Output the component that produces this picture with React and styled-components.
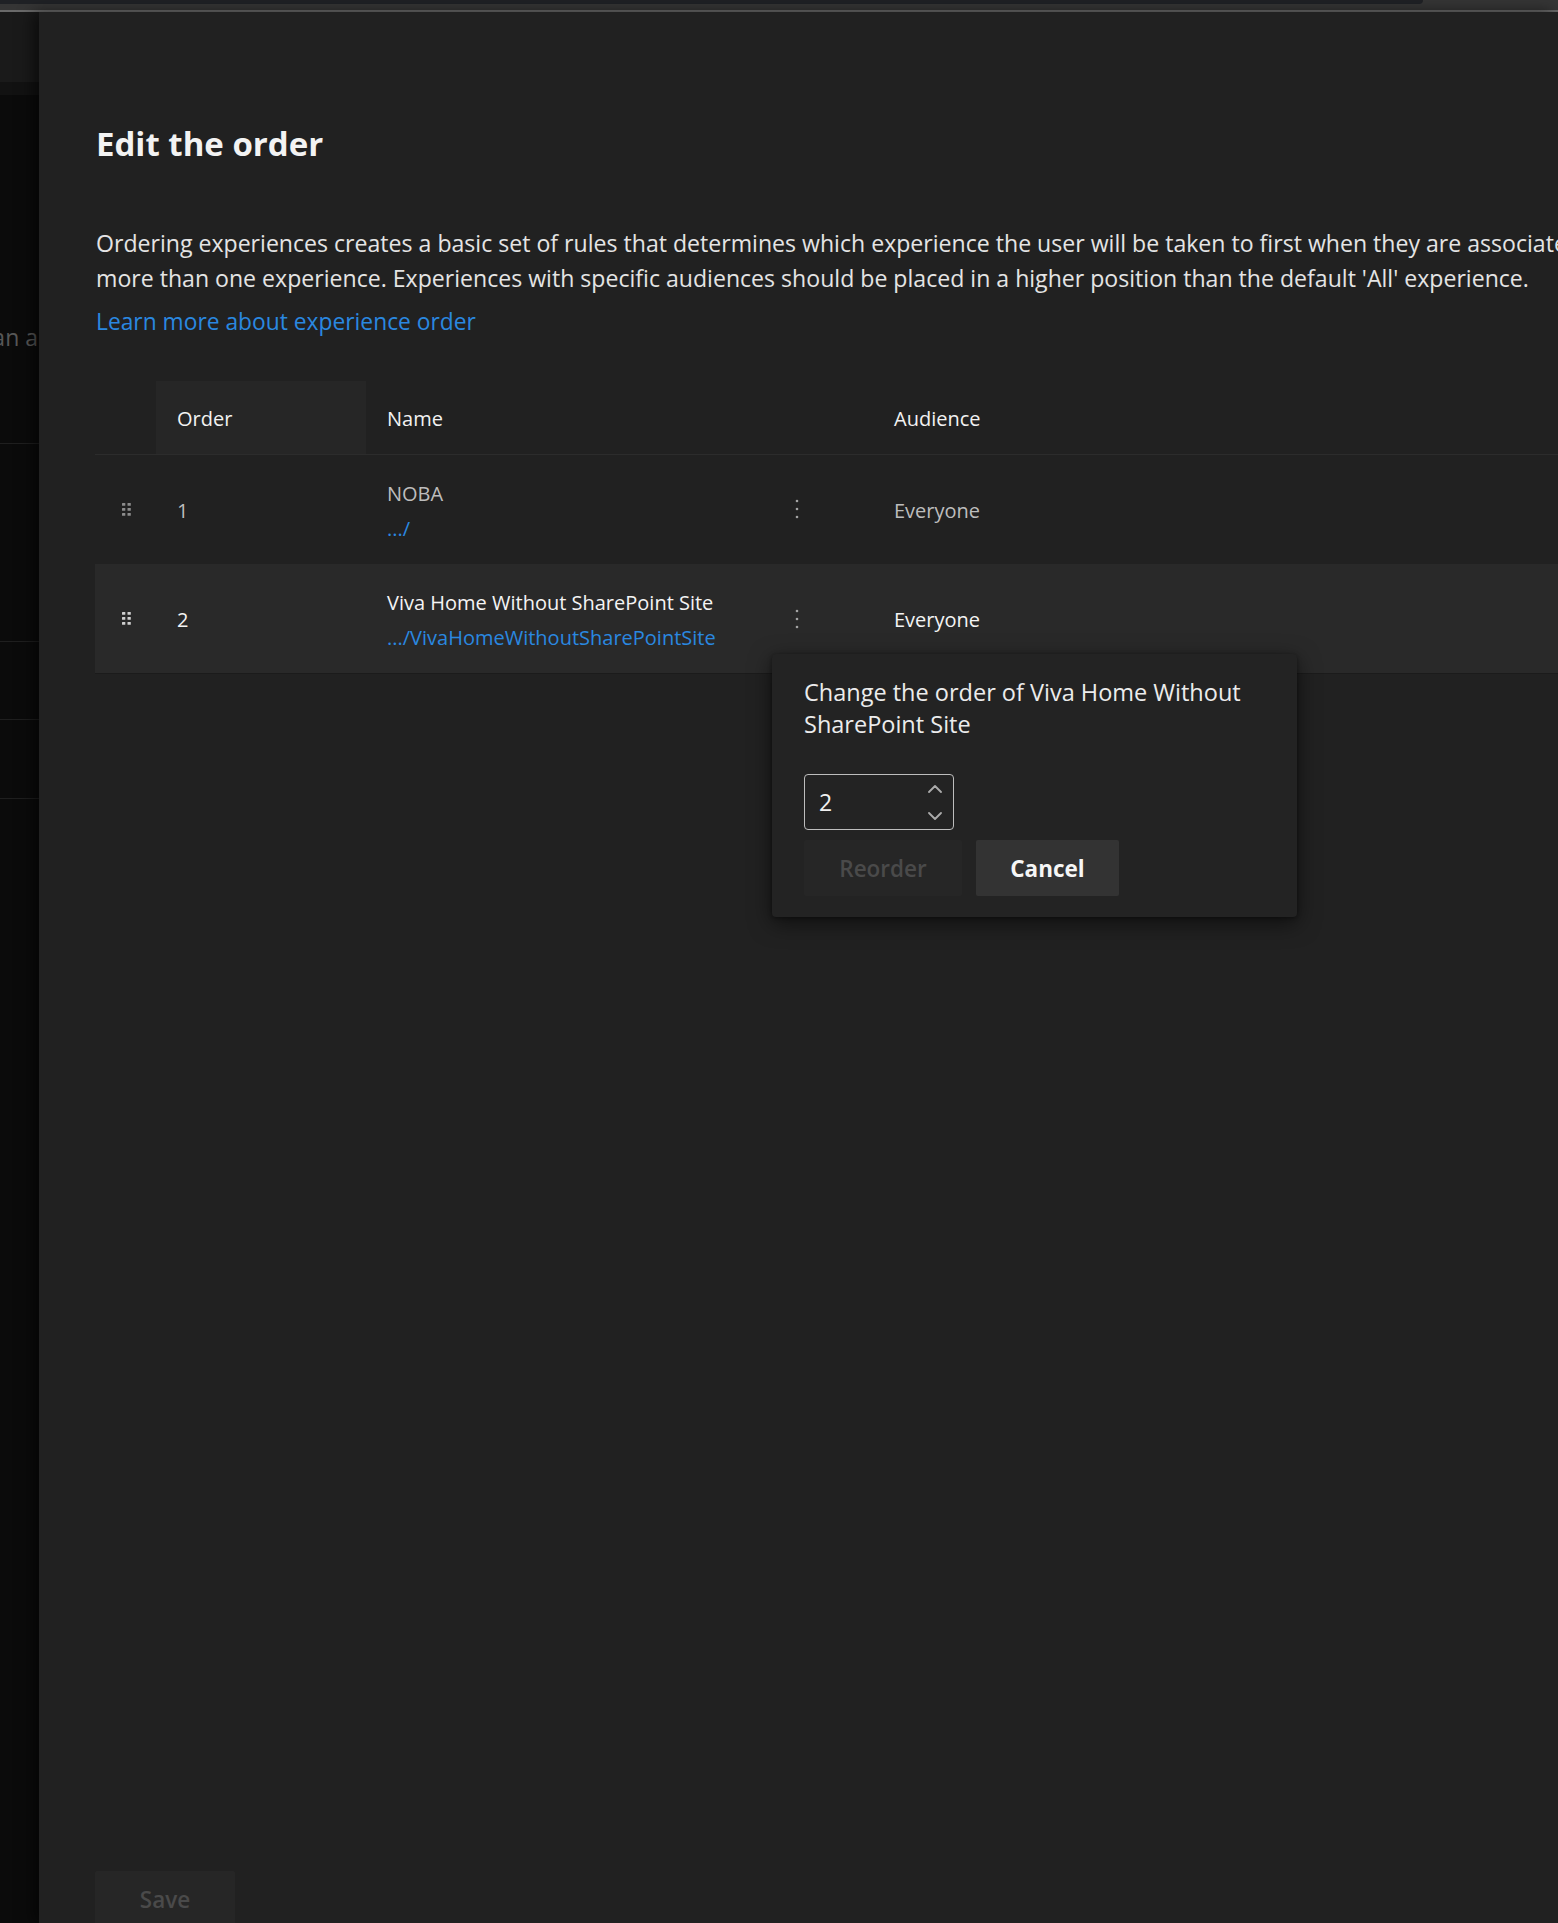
import React from 'react';
import styled, { createGlobalStyle } from 'styled-components';

const GlobalStyle = createGlobalStyle`
  html, body { margin: 0; padding: 0; background: #0b0b0b; }
  body { font-family: "Open Sans", "Noto Sans", sans-serif; overflow: hidden; }
  #root { width: 1558px; height: 1923px; }
  * { box-sizing: border-box; }
`;

const Page = styled.div`
  display: flex;
  flex-direction: column;
  width: 1558px;
  height: 1923px;
  overflow: hidden;
  background: #0b0b0b;
`;

const TopBar = styled.div`
  flex-shrink: 0;
  height: 12px;
  background: #353535;
  border-bottom: 2px solid #6a6a6a;
`;

const ScrollThumb = styled.div`
  width: 1423px;
  height: 4px;
  background: #1f2125;
  border-bottom-right-radius: 4px;
`;

const Main = styled.div`
  flex: 1;
  display: flex;
  min-height: 0;
`;

const Backdrop = styled.div`
  width: 39px;
  flex-shrink: 0;
  display: flex;
  flex-direction: column;
  overflow: hidden;
  background: #0b0b0b;
`;

const BackdropHeader = styled.div`
  height: 70px;
  background: #1a1a1a;
`;

const BackdropBand = styled.div`
  height: 13px;
  background: #121212;
`;

const BackdropText = styled.div`
  margin-top: 227px;
  height: 30px;
  display: flex;
  justify-content: flex-end;
  padding-right: 1px;
  white-space: nowrap;
  font-size: 23px;
  line-height: 30px;
  color: #575757;
`;

const BackdropRow = styled.div`
  flex-shrink: 0;
  height: ${p => p.$h}px;
  border-bottom: 1px solid #1f1f1f;
`;

const Panel = styled.div`
  flex: 1;
  min-width: 0;
  display: flex;
  flex-direction: column;
  background: #212121;
  box-shadow: -6px 0 14px rgba(0, 0, 0, 0.55);
  padding: 112px 0 0 56px;
  overflow: hidden;
  position: relative;
`;

const Title = styled.h1`
  margin: 0 0 0 1px;
  font-size: 33px;
  line-height: 40px;
  font-weight: 700;
  color: #f3f3f3;
`;

const Description = styled.p`
  margin: 62px 0 0 1px;
  font-size: 23.1px;
  line-height: 35px;
  color: #e4e4e4;
  white-space: nowrap;
`;

const LearnLink = styled.a`
  display: block;
  margin: 8px 0 0 1px;
  font-size: 22.8px;
  line-height: 35px;
  color: #2a88e0;
  text-decoration: none;
  white-space: nowrap;
`;

const Table = styled.div`
  position: relative;
  margin-top: 42px;
`;

const columns = '61px 210px 507px 1fr';

const HeaderRow = styled.div`
  display: grid;
  grid-template-columns: ${columns};
  height: 74px;
  border-bottom: 1px solid #2c2c2c;
`;

const HeaderCell = styled.div`
  display: flex;
  align-items: center;
  padding-left: 21px;
  padding-top: 2px;
  font-size: 20px;
  color: #f2f2f2;
  background: ${p => (p.$active ? '#262626' : 'transparent')};
`;

const Row = styled.div`
  display: grid;
  grid-template-columns: ${columns};
  height: ${p => (p.$selected ? 110 : 109)}px;
  background: ${p => (p.$selected ? '#292929' : 'transparent')};
  border-bottom: 1px solid ${p => (p.$selected ? '#1b1b1b' : 'transparent')};
  color: ${p => (p.$selected ? '#f4f4f4' : '#bdbdbd')};
`;

const HandleCell = styled.div`
  display: flex;
  align-items: center;
  justify-content: center;
  padding-left: 1px;
  color: ${p => (p.$selected ? '#cfcfcf' : '#8c8c8c')};
`;

const Cell = styled.div`
  display: flex;
  align-items: center;
  padding-left: 21px;
  padding-top: 2px;
  font-size: 20px;
`;

const NameCell = styled.div`
  display: flex;
  align-items: center;
  justify-content: space-between;
  padding: 0 60px 0 21px;
  font-size: 20px;
`;

const NameBlock = styled.div`
  display: flex;
  flex-direction: column;
  line-height: 35px;
  padding-top: 3px;
`;

const PathLink = styled.a`
  color: #2a88e0;
  text-decoration: none;
`;

const KebabButton = styled.button`
  width: 32px;
  height: 40px;
  padding: 0;
  border: none;
  background: transparent;
  display: flex;
  align-items: center;
  justify-content: center;
  color: #a3a3a3;
`;

const Callout = styled.div`
  position: absolute;
  top: 273px;
  left: 677px;
  width: 525px;
  height: 263px;
  padding: 22px 32px 21px;
  background: #232323;
  border-radius: 4px;
  box-shadow: 0 6px 22px rgba(0, 0, 0, 0.55), 0 1px 4px rgba(0, 0, 0, 0.4);
  display: flex;
  flex-direction: column;
`;

const CalloutTitle = styled.div`
  font-size: 23.5px;
  line-height: 32px;
  color: #ececec;
  max-width: 450px;
`;

const SpinBox = styled.div`
  margin-top: 34px;
  width: 150px;
  height: 56px;
  border: 1px solid #bdbdbd;
  border-radius: 4px;
  display: flex;
  align-items: center;
  justify-content: space-between;
  padding: 0 11px 0 14px;
  font-size: 23px;
  color: #f0f0f0;
`;

const SpinArrows = styled.div`
  display: flex;
  flex-direction: column;
  gap: 19px;
  color: #ababab;
`;

const ButtonRow = styled.div`
  margin-top: 10px;
  display: flex;
  gap: 14px;
`;

const Button = styled.button`
  height: 56px;
  width: ${p => p.$w}px;
  border: none;
  border-radius: 2px;
  font-family: inherit;
  font-size: 22.5px;
  font-weight: ${p => (p.$primary ? 700 : 600)};
  background: ${p => (p.$primary ? '#333333' : '#262626')};
  color: ${p => (p.$primary ? '#f6f6f6' : '#4a4a4a')};
  padding: 0;
`;

const Footer = styled.div`
  margin-top: auto;
  margin-bottom: -4px;
`;

const DragHandle = () => (
  <svg width="9" height="13" viewBox="0 0 9 13" fill="currentColor">
    <rect x="0" y="0" width="3.3" height="2.8" rx="0.5" />
    <rect x="5.5" y="0" width="3.3" height="2.8" rx="0.5" />
    <rect x="0" y="5" width="3.3" height="2.8" rx="0.5" />
    <rect x="5.5" y="5" width="3.3" height="2.8" rx="0.5" />
    <rect x="0" y="10" width="3.3" height="2.8" rx="0.5" />
    <rect x="5.5" y="10" width="3.3" height="2.8" rx="0.5" />
  </svg>
);

const Kebab = () => (
  <svg width="4" height="20" viewBox="0 0 4 20" fill="currentColor">
    <circle cx="2" cy="2" r="1.3" />
    <circle cx="2" cy="10" r="1.3" />
    <circle cx="2" cy="18" r="1.3" />
  </svg>
);

const Chevron = ({ up }) => (
  <svg width="14" height="8" viewBox="0 0 14 8" fill="none" stroke="currentColor" strokeWidth="1.8" strokeLinecap="round" strokeLinejoin="round">
    {up ? <polyline points="1,7 7,1 13,7" /> : <polyline points="1,1 7,7 13,1" />}
  </svg>
);

const rows = [
  { order: 1, name: 'NOBA', path: '.../', audience: 'Everyone', selected: false },
  { order: 2, name: 'Viva Home Without SharePoint Site', path: '.../VivaHomeWithoutSharePointSite', audience: 'Everyone', selected: true },
];

export default function App() {
  return (
    <Page>
      <GlobalStyle />
      <TopBar>
        <ScrollThumb />
      </TopBar>
      <Main>
        <Backdrop>
          <BackdropHeader />
          <BackdropBand />
          <BackdropText>more than a</BackdropText>
          <BackdropRow $h={92} />
          <BackdropRow $h={198} />
          <BackdropRow $h={78} />
          <BackdropRow $h={79} />
        </Backdrop>
        <Panel>
          <Title>Edit the order</Title>
          <Description>
            Ordering experiences creates a basic set of rules that determines which experience the user will be taken to first when they are associated with
            <br />
            more than one experience. Experiences with specific audiences should be placed in a higher position than the default 'All' experience.
          </Description>
          <LearnLink href="#">Learn more about experience order</LearnLink>
          <Table>
            <HeaderRow>
              <HeaderCell />
              <HeaderCell $active>Order</HeaderCell>
              <HeaderCell>Name</HeaderCell>
              <HeaderCell>Audience</HeaderCell>
            </HeaderRow>
            {rows.map(r => (
              <Row key={r.order} $selected={r.selected}>
                <HandleCell $selected={r.selected}>
                  <DragHandle />
                </HandleCell>
                <Cell>{r.order}</Cell>
                <NameCell>
                  <NameBlock>
                    <span>{r.name}</span>
                    <PathLink href="#">{r.path}</PathLink>
                  </NameBlock>
                  <KebabButton aria-label="More options">
                    <Kebab />
                  </KebabButton>
                </NameCell>
                <Cell>{r.audience}</Cell>
              </Row>
            ))}
            <Callout>
              <CalloutTitle>Change the order of Viva Home Without SharePoint Site</CalloutTitle>
              <SpinBox>
                <span>2</span>
                <SpinArrows>
                  <Chevron up />
                  <Chevron />
                </SpinArrows>
              </SpinBox>
              <ButtonRow>
                <Button $w={158} disabled>Reorder</Button>
                <Button $w={143} $primary>Cancel</Button>
              </ButtonRow>
            </Callout>
          </Table>
          <Footer>
            <Button $w={140} disabled>Save</Button>
          </Footer>
        </Panel>
      </Main>
    </Page>
  );
}
